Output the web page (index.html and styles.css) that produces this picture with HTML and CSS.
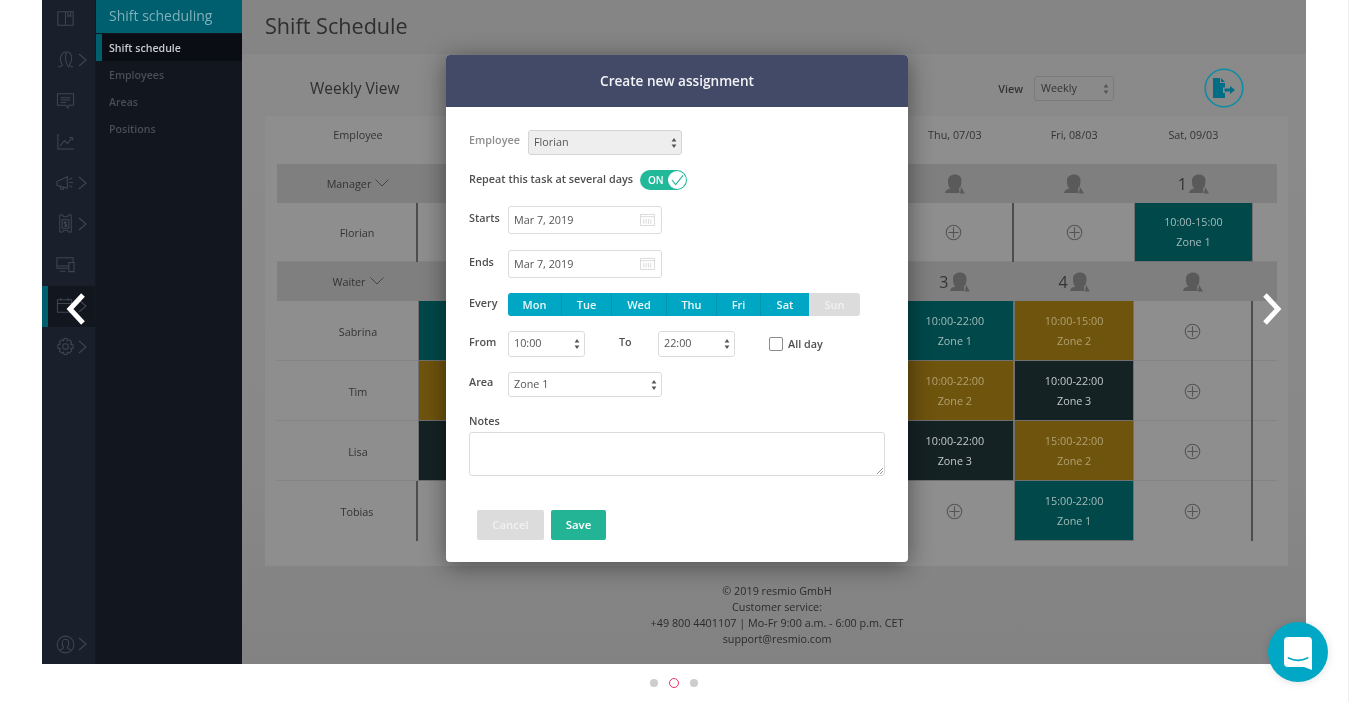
FILE: index.html
```html
<!DOCTYPE html>
<html>
  <head>
    <title>resmio shift schedule</title>
    <link rel="stylesheet" href="styles.css">
  </head>
  <body>
    <svg class="defs" width="0" height="0">
      <symbol id="person" viewBox="0 0 20 20">
        <path d="M4 13c-.8-2-1-4-1-6.500C3 3 6 .5 10 .5s6.500 2.500 6.500 6c0 2.500-.5 4.500-1 6.500l-1.500 1 .5 5H0c.5-3 3-4 5.500-4.500z"/>
        <path d="M16 13l4 6.500h-5z"/>
      </symbol>
      <symbol id="plus" viewBox="0 0 18 18">
        <circle cx="9" cy="9" r="7.700" fill="none" stroke="#555" stroke-width="1.100"/>
        <path d="M9 3.500v11M3.500 9h11" fill="none" stroke="#555" stroke-width="1.100"/>
      </symbol>
      <symbol id="chev" viewBox="0 0 9 14">
        <path d="M1 1l7 6-7 6" fill="none" stroke="#3f4650" stroke-width="1.100"/>
      </symbol>
      <symbol id="updown" viewBox="0 0 6 12">
        <path d="M3 1l2.400 3.600H.6zM3 11L.6 7.400h4.800z" fill="#555"/>
      </symbol>
      <symbol id="cal" viewBox="0 0 16 14">
        <path d="M.5 1.500h15v12H.5zM.5 4h15M4 6.500v5M6.500 6.500v5M9 6.500v5M11.500 6.500v5" fill="none" stroke="#d8d8d8"/>
      </symbol>
    </svg>

    <div class="page">
      <div class="screen">
        <div class="shot">
          <nav class="rail">
            <div class="rail-item">
              <svg class="rail-icon" viewBox="0 0 20 20"><path d="M2 3h16v14H2zM10 3v14M12.500 3v5l1.500-1 1.500 1V3"/></svg>
            </div>
            <div class="rail-item">
              <svg class="rail-icon" viewBox="0 0 20 20"><path d="M2 18c3 0 4-1 5-2-2-3-3-6-2-9 1-3 3-5 6-5s5 2 5.500 5c.4 3-.5 6-2.500 9 1 1 2 2 4 2M11 3c-2 3-1 9 1 13 .5 1 1 2 2 2"/></svg>
              <svg class="rail-chev"><use href="#chev"/></svg>
            </div>
            <div class="rail-item">
              <svg class="rail-icon" viewBox="0 0 20 20"><path d="M1.500 3h17v12h-5l-1 3-2-3H1.500zM5 7h10M5 9.500h10M5 12h6"/></svg>
            </div>
            <div class="rail-item">
              <svg class="rail-icon" viewBox="0 0 20 20"><path d="M2 2v16h17M4 15l5-6 3 3 5-6M14 5.500l3.500.5V9"/></svg>
            </div>
            <div class="rail-item">
              <svg class="rail-icon" viewBox="0 0 20 20"><path d="M1 9l11-5v12L1 13zM4 14l1 3h3l-1-2.200M14 7l3-2M14 10h4M14 13l3 2"/></svg>
              <svg class="rail-chev"><use href="#chev"/></svg>
            </div>
            <div class="rail-item">
              <svg class="rail-icon" viewBox="0 0 20 20"><path d="M4 1h3l1 2h4l1-2h3v18h-3l-1-2H8l-1 2H4zM6.500 6h7v9h-7z"/><path d="M10 7.500v6M11.500 9c-1.500-1-3-.5-3 .5 0 1.500 3 1 3 2.500 0 1-1.500 1.500-3 .5"/></svg>
              <svg class="rail-chev"><use href="#chev"/></svg>
            </div>
            <div class="rail-item">
              <svg class="rail-icon" viewBox="0 0 20 20"><path d="M13 14H1V3h17v4M4 17h6M1 11.500h12M13.500 8h5.500v9.500h-5.500z"/></svg>
            </div>
            <div class="rail-item rail-active">
              <svg class="rail-icon" viewBox="0 0 20 20"><path d="M1.500 4h15v13h-15zM1.500 8h15M5 2v3M13 2v3"/></svg>
              <svg class="rail-chev"><use href="#chev"/></svg>
            </div>
            <div class="rail-item">
              <svg class="rail-icon" viewBox="0 0 20 20"><circle cx="10" cy="10" r="3"/><path d="M8.500 1.500h3l.5 2.500 2-1 2.500 2.300-1.200 2.200 2.700.8v3.400l-2.700.8 1.200 2.200-2.500 2.300-2-1-.5 2.500h-3l-.5-2.500-2 1-2.500-2.300 1.200-2.200-2.700-.8V8.300l2.700-.8-1.200-2.200L6 3l2 1z"/></svg>
              <svg class="rail-chev"><use href="#chev"/></svg>
            </div>
            <div class="rail-item rail-bottom">
              <svg class="rail-icon" viewBox="0 0 20 20"><circle cx="10" cy="10" r="8.800"/><path d="M4 16c2-1 3.500-1.500 4-2.500-1-1.500-1.500-3-1.500-5C6.500 6 8 4.500 10 4.500s3.500 1.500 3.500 4c0 2-.5 3.500-1.500 5 .5 1 2 1.500 4 2.500"/></svg>
              <svg class="rail-chev"><use href="#chev"/></svg>
            </div>
          </nav>

          <aside class="menu">
            <div class="menu-head">Shift scheduling</div>
            <div class="menu-item menu-active">Shift schedule</div>
            <div class="menu-item">Employees</div>
            <div class="menu-item">Areas</div>
            <div class="menu-item">Positions</div>
          </aside>

          <main class="main">
            <h1 class="title">Shift Schedule</h1>
            <div class="toolbar">
              <div class="week-title">Weekly View</div>
              <label class="view-label">View</label>
              <div class="view-select">Weekly<svg class="updown"><use href="#updown"/></svg></div>
              <svg class="export" viewBox="0 0 40 40">
                <circle cx="20" cy="20" r="18.800" fill="none" stroke="#0b8ea3" stroke-width="1.600"/>
                <path d="M9 10h7v5h5v4.500h-2V25h2v5H9zM17 10l4 4h-4z" fill="#006f86"/>
                <path d="M20.500 20.500H26V18l5 4-5 4v-2.500h-5.500z" fill="#006f86"/>
              </svg>
            </div>

            <section class="card">
              <div class="row row-head">
                <div class="name">Employee</div>
                <div class="day col-thu">Thu, 07/03</div>
                <div class="day">Fri, 08/03</div>
                <div class="day">Sat, 09/03</div>
              </div>

              <div class="row band">
                <div class="name">Manager <svg class="caret" viewBox="0 0 14 8"><path d="M.5.5L7 7l6.500-6.500"/></svg></div>
                <div class="count col-thu"><svg class="person"><use href="#person"/></svg></div>
                <div class="count"><svg class="person"><use href="#person"/></svg></div>
                <div class="count">1<svg class="person"><use href="#person"/></svg></div>
              </div>

              <div class="row row-short">
                <div class="name name-line">Florian</div>
                <div class="open col-thu line-right"><svg class="plus"><use href="#plus"/></svg></div>
                <div class="open"><svg class="plus"><use href="#plus"/></svg></div>
                <div class="shift teal">10:00-15:00<br>Zone 1</div>
              </div>

              <div class="row band">
                <div class="name">Waiter <svg class="caret" viewBox="0 0 14 8"><path d="M.5.5L7 7l6.500-6.500"/></svg></div>
                <div class="count col-thu">3<svg class="person"><use href="#person"/></svg></div>
                <div class="count">4<svg class="person"><use href="#person"/></svg></div>
                <div class="count"><svg class="person"><use href="#person"/></svg></div>
              </div>

              <div class="row">
                <div class="name">Sabrina</div>
                <div class="shift teal"></div>
                <div class="shift teal col-thu">10:00-22:00<br>Zone 1</div>
                <div class="shift amber">10:00-15:00<br>Zone 2</div>
                <div class="open line-right"><svg class="plus"><use href="#plus"/></svg></div>
              </div>
              <div class="row">
                <div class="name">Tim</div>
                <div class="shift amber"></div>
                <div class="shift amber col-thu">10:00-22:00<br>Zone 2</div>
                <div class="shift slate">10:00-22:00<br>Zone 3</div>
                <div class="open line-right"><svg class="plus"><use href="#plus"/></svg></div>
              </div>
              <div class="row">
                <div class="name">Lisa</div>
                <div class="shift slate"></div>
                <div class="shift slate col-thu">10:00-22:00<br>Zone 3</div>
                <div class="shift amber">15:00-22:00<br>Zone 2</div>
                <div class="open line-right"><svg class="plus"><use href="#plus"/></svg></div>
              </div>
              <div class="row row-last">
                <div class="name name-line">Tobias</div>
                <div class="open col-thu"><svg class="plus"><use href="#plus"/></svg></div>
                <div class="shift teal">15:00-22:00<br>Zone 1</div>
                <div class="open line-right"><svg class="plus"><use href="#plus"/></svg></div>
              </div>
            </section>

            <footer class="foot">
              <div>© 2019 resmio GmbH</div>
              <div>Customer service:</div>
              <div>+49 800 4401107 | Mo-Fr 9:00 a.m. - 6:00 p.m. CET</div>
              <div>support@resmio.com</div>
            </footer>
          </main>

          <div class="modal">
            <div class="modal-head">Create new assignment</div>
            <form class="form">
              <div class="field">
                <label class="muted">Employee</label>
                <div class="select select-off w-154">Florian<svg class="updown"><use href="#updown"/></svg></div>
              </div>
              <div class="field field-repeat">
                <label class="repeat-label">Repeat this task at several days</label>
                <div class="toggle">ON<span class="knob"><svg viewBox="0 0 14 12"><path d="M1 6l4 5 8-10" fill="none" stroke="#22b99a" stroke-width="1.200"/></svg></span></div>
              </div>
              <div class="field field-date">
                <label>Starts</label>
                <div class="date w-154">Mar 7, 2019<svg class="cal"><use href="#cal"/></svg></div>
              </div>
              <div class="field field-date">
                <label>Ends</label>
                <div class="date w-154">Mar 7, 2019<svg class="cal"><use href="#cal"/></svg></div>
              </div>
              <div class="field">
                <label>Every</label>
                <div class="days">
                  <span class="seg w-mon">Mon</span><span class="seg w-tue">Tue</span><span class="seg w-wed">Wed</span><span class="seg w-thu">Thu</span><span class="seg w-fri">Fri</span><span class="seg w-sat">Sat</span><span class="seg seg-off">Sun</span>
                </div>
              </div>
              <div class="field field-time">
                <label>From</label>
                <div class="select w-77">10:00<svg class="updown"><use href="#updown"/></svg></div>
                <label class="to-label">To</label>
                <div class="select w-77">22:00<svg class="updown"><use href="#updown"/></svg></div>
                <span class="check"></span>
                <label class="allday">All day</label>
              </div>
              <div class="field">
                <label>Area</label>
                <div class="select w-154">Zone 1<svg class="updown"><use href="#updown"/></svg></div>
              </div>
              <div class="notes">
                <label>Notes</label>
                <div class="textarea"><svg class="grip" viewBox="0 0 8 8"><path d="M1 7l6-6M4 7l3-3" stroke="#999" fill="none"/></svg></div>
              </div>
              <div class="buttons">
                <span class="btn btn-cancel">Cancel</span>
                <span class="btn btn-save">Save</span>
              </div>
            </form>
          </div>
        </div>

        <svg class="arrow arrow-left" viewBox="0 0 22 34"><path d="M18 3L5 17l13 14" fill="none" stroke="#fff" stroke-width="5"/></svg>
        <svg class="arrow arrow-right" viewBox="0 0 22 34"><path d="M4 3l13 14L4 31" fill="none" stroke="#fff" stroke-width="5"/></svg>
      </div>

      <div class="dots">
        <span class="dot"></span>
        <span class="dot dot-on"></span>
        <span class="dot"></span>
      </div>

      <div class="launcher">
        <svg viewBox="0 0 28 33">
          <path d="M4 0h20a4 4 0 0 1 4 4v29l-8-3H4a4 4 0 0 1-4-4V4a4 4 0 0 1 4-4z" fill="#fff"/>
          <path d="M4.500 21c6 3 13 3 19 0" fill="none" stroke="#00a8c6" stroke-width="1.800" stroke-linecap="round"/>
        </svg>
      </div>
    </div>
  </body>
</html>
```

FILE: styles.css
```css
html,
body {
  margin: 0;
  height: 100%;
  overflow: hidden;
  background: #fff;
  font-family: "Open Sans", "Noto Sans", sans-serif;
}

.defs {
  position: absolute;
}

.page {
  position: relative;
  height: 702px;
  border-right: 1px solid #eee;
  box-sizing: border-box;
  padding-left: 42px;
}

.screen {
  position: relative;
  width: 1264px;
  height: 664px;
  overflow: hidden;
}

.shot {
  position: relative;
  display: flex;
  height: 100%;
  background: linear-gradient(#8a8a8a, #888 70%, #828282);
  filter: blur(0.4px);
}

/* icon rail */
.rail {
  display: flex;
  flex-direction: column;
  flex: 0 0 53px;
  margin-top: -1px;
  background: #1a202b;
  border-right: 1px solid #131822;
}

.rail-item {
  display: flex;
  align-items: center;
  flex: 0 0 41px;
  padding: 0 0 2px 14px;
  box-sizing: border-box;
}

.rail-active {
  background: #12161f;
  border-left: 6px solid #005f6e;
  padding-left: 8px;
}

.rail-bottom {
  margin-top: auto;
  margin-bottom: -1px;
  flex-basis: 40px;
}

.rail-icon {
  width: 19px;
  height: 19px;
  fill: none;
  stroke: #3f4650;
  stroke-width: 1.1;
}

.rail-chev {
  width: 9px;
  height: 14px;
  margin-left: 3px;
}

/* text menu */
.menu {
  flex: 0 0 146px;
  background: #11161f;
  font-size: 10.6px;
  font-weight: 600;
  color: #484d57;
}

.menu-head {
  height: 33px;
  margin-bottom: 1px;
  padding: 6px 0 0 13px;
  box-sizing: border-box;
  background: #005f6f;
  color: #7fb1ba;
  font-size: 14px;
  font-weight: 400;
}

.menu-item {
  display: flex;
  align-items: center;
  height: 27px;
  padding-left: 13px;
}

.menu-active {
  padding-left: 7px;
  background: #0a0d14;
  border-left: 6px solid #005f6f;
  color: #c9cbce;
}

/* schedule */
.main {
  flex: 1;
  color: #333;
}

.title {
  height: 54px;
  margin: 0;
  padding: 9px 0 0 23px;
  box-sizing: border-box;
  background: #858585;
  font-size: 21.6px;
  font-weight: 400;
  line-height: 34px;
  color: #2e2e2e;
}

.toolbar {
  display: flex;
  align-items: center;
  height: 62px;
  padding: 6px 62px 0 68px;
  box-sizing: border-box;
}

.week-title {
  flex: 1;
  font-size: 15.5px;
  color: #2f2f2f;
}

.view-label {
  margin-right: 11px;
  font-size: 10.8px;
  font-weight: 600;
}

.view-select {
  position: relative;
  width: 80px;
  height: 25px;
  padding-left: 6px;
  box-sizing: border-box;
  border: 1px solid #7a7a7a;
  border-radius: 3px;
  font-size: 10.8px;
  line-height: 22px;
}

.view-select .updown {
  right: 4px;
  top: 6px;
}

.export {
  width: 40px;
  height: 40px;
  margin-left: 90px;
}

.card {
  width: 1023px;
  height: 450px;
  margin-left: 23px;
  padding: 0 11px 0 12px;
  box-sizing: border-box;
  background: #8e8e8e;
}

.row {
  display: grid;
  grid-template-columns: 141px repeat(7, 119.3px) 1fr;
  height: 60px;
  font-size: 10.8px;
  box-shadow: inset 0 -1px 0 #838383;
}

.row-head {
  height: 48px;
  box-shadow: none;
}

.row-short {
  height: 59px;
}

.row-last {
  box-shadow: none;
}

.band {
  height: 39px;
  background: #7f7f7f;
  box-shadow: none;
}

.name {
  display: flex;
  align-items: center;
  justify-content: center;
  padding-left: 21px;
  color: #333;
}

.name-line {
  border-right: 2px solid #4d4d4d;
  box-sizing: border-box;
}

.row-head .name,
.day {
  align-items: flex-start;
  padding-top: 11px;
  text-align: center;
  color: #333;
}

.col-thu {
  grid-column-start: 6;
}

.count {
  display: flex;
  align-items: center;
  justify-content: center;
  gap: 2px;
  font-size: 16px;
  color: #333;
}

.person {
  width: 20px;
  height: 20px;
  fill: #5a5a5a;
}

.caret {
  width: 14px;
  height: 8px;
  margin: -2px 0 0 4px;
  fill: none;
  stroke: #444;
}

.open {
  display: flex;
  align-items: center;
  justify-content: center;
  box-sizing: border-box;
}

.line-right {
  border-right: 2px solid #4d4d4d;
}

.plus {
  width: 17px;
  height: 17px;
}

.shift {
  padding-top: 10px;
  box-sizing: border-box;
  border: 1px solid #707070;
  border-width: 0 1px 1px;
  line-height: 20px;
  text-align: center;
}

.row-short .shift {
  padding-top: 9px;
}

.teal {
  background: #00484a;
  color: #a5baba;
}

.amber {
  background: #6f540e;
  color: #b0a071;
}

.slate {
  background: #152224;
  color: #c2c8c8;
}

.foot {
  padding: 17px 0 0 6px;
  font-size: 10.8px;
  line-height: 16px;
  text-align: center;
  color: #2b2b2b;
}

/* modal */
.modal {
  position: absolute;
  left: 404px;
  top: 55px;
  width: 462px;
  height: 507px;
  background: #fff;
  border-radius: 4px;
  box-shadow: 0 4px 24px rgba(0, 0, 0, 0.45);
}

.modal-head {
  height: 52px;
  background: #434a68;
  border-radius: 4px 4px 0 0;
  color: #f2f3f5;
  font-size: 13.6px;
  font-weight: 600;
  line-height: 51px;
  text-align: center;
}

.form {
  display: flex;
  flex-direction: column;
  gap: 15px;
  padding: 23px 23px 0;
  font-size: 10.8px;
  color: #555;
}

.field {
  display: flex;
  align-items: flex-start;
}

.field label,
.notes label {
  width: 39px;
  padding-top: 2px;
  font-weight: 600;
  line-height: 16px;
  color: #4f4f4f;
  white-space: nowrap;
}

.field .muted {
  width: 59px;
  color: #8e8e8e;
}

.field-repeat {
  align-items: center;
  height: 20px;
}

.field .repeat-label {
  width: 171px;
  padding-top: 0;
  margin-top: -3px;
}

.field-date {
  margin-top: 1px;
}

.field-date label {
  margin-top: 2px;
}

.field-time label {
  padding-top: 3px;
}

.field-time .to-label {
  width: 39px;
  margin-left: 34px;
}

.field .allday {
  padding-top: 5px;
  margin-left: 5px;
}

.select,
.date {
  position: relative;
  height: 25px;
  padding-left: 5px;
  box-sizing: border-box;
  background: #fff;
  border: 1px solid #dcdcdc;
  border-radius: 3px;
  line-height: 21px;
  color: #555;
}

.select .updown {
  right: 4px;
  top: 6px;
}

.updown {
  position: absolute;
  width: 6px;
  height: 12px;
}

.select-off {
  background: #eee;
  border-color: #d4d4d4;
}

.date {
  height: 28px;
  line-height: 26px;
}

.cal {
  position: absolute;
  right: 6px;
  top: 6px;
  width: 15px;
  height: 13px;
}

.w-154 {
  width: 154px;
}

.w-77 {
  width: 77px;
  height: 26px;
}

.toggle {
  display: flex;
  align-items: center;
  justify-content: space-between;
  width: 47px;
  height: 20px;
  padding-left: 8px;
  box-sizing: border-box;
  background: #22b99a;
  border-radius: 10px;
  color: #fff;
  font-size: 10px;
  font-weight: 600;
}

.knob {
  display: flex;
  align-items: center;
  justify-content: center;
  width: 18px;
  height: 18px;
  margin-right: 1px;
  background: #fff;
  border-radius: 50%;
}

.knob svg {
  width: 13px;
  height: 12px;
}

.days {
  display: flex;
  height: 23px;
  border-radius: 3px;
  overflow: hidden;
  font-size: 11px;
  font-weight: 600;
  line-height: 23px;
  text-align: center;
}

.seg {
  box-sizing: border-box;
  background: #00a7c4;
  border-right: 1px solid #0295ae;
  color: #e9f7fa;
}

.w-mon { width: 54px; }
.w-tue { width: 50px; }
.w-wed { width: 55px; }
.w-thu { width: 50px; }
.w-fri { width: 44px; }
.w-sat { width: 48px; border-right: 0; }

.seg-off {
  width: 51px;
  background: #dcdcdc;
  border-right: 0;
  color: #f1f1f1;
}

.check {
  width: 14px;
  height: 14px;
  margin: 6px 0 0 34px;
  box-sizing: border-box;
  border: 1px solid #8a8a8a;
  border-radius: 2px;
}

.notes label {
  display: block;
  padding-top: 0;
  margin-top: 1px;
  margin-bottom: 3px;
}

.textarea {
  position: relative;
  height: 44px;
  box-sizing: border-box;
  border: 1px solid #dcdcdc;
  border-radius: 3px;
}

.grip {
  position: absolute;
  right: 0;
  bottom: 0;
  width: 8px;
  height: 8px;
}

.buttons {
  display: flex;
  gap: 7px;
  margin-top: 19px;
  padding-left: 8px;
}

.btn {
  height: 30px;
  border-radius: 2px;
  color: #fff;
  font-size: 11.4px;
  font-weight: 600;
  line-height: 29px;
  text-align: center;
}

.btn-cancel {
  width: 67px;
  background: #dcdcdc;
  color: #f1f1f1;
}

.btn-save {
  width: 55px;
  background: #22b495;
}

/* carousel controls */
.arrow {
  position: absolute;
  top: 292px;
  width: 22px;
  height: 34px;
}

.arrow-left {
  left: 23px;
}

.arrow-right {
  left: 1219px;
}

.dots {
  display: flex;
  justify-content: center;
  align-items: center;
  gap: 12px;
  width: 1348px;
  margin: 14px 0 0 -42px;
}

.dot {
  width: 8px;
  height: 8px;
  background: #ccc;
  border-radius: 50%;
}

.dot-on {
  box-sizing: border-box;
  background: #fff;
  border: 1px solid #e8335f;
  width: 10px;
  height: 10px;
  margin: 0 -1px;
}

.launcher {
  position: absolute;
  left: 1268px;
  top: 622px;
  display: flex;
  align-items: center;
  justify-content: center;
  width: 60px;
  height: 60px;
  background: #00a8c6;
  border-radius: 50%;
  box-shadow: 0 1px 8px rgba(0, 0, 0, 0.12);
}

.launcher svg {
  width: 28px;
  height: 33px;
  margin-top: 2px;
}
```
